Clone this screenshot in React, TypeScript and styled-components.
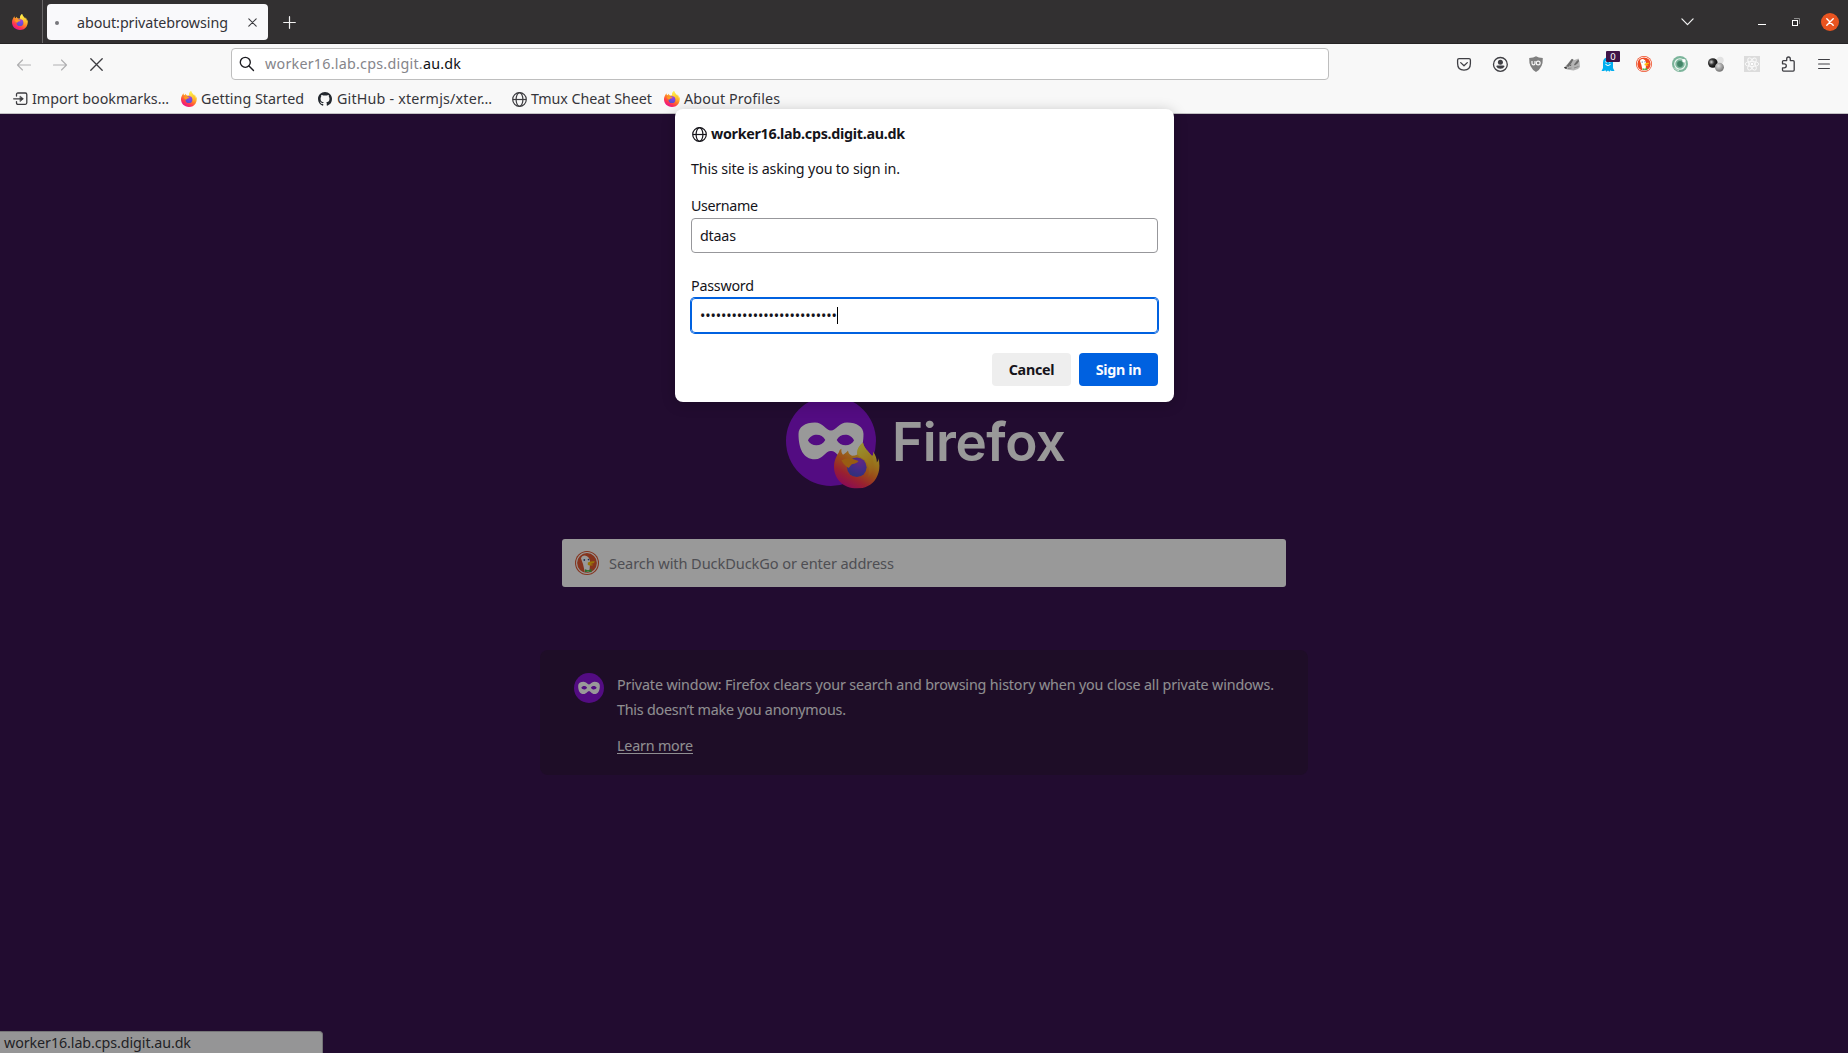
import React, { useId, useLayoutEffect, useRef, useState } from "react";
import styled, { createGlobalStyle } from "styled-components";

const UI_FONT = `"Noto Sans", "Open Sans", sans-serif`;

const GlobalStyle = createGlobalStyle`
  * { box-sizing: border-box; }
  html, body { margin: 0; padding: 0; }
  body { font-family: ${UI_FONT}; font-size: 14.3px; line-height: 20px; overflow: hidden; }
  svg { display: block; flex: none; }
`;

/* Text set to a known width by adjusting its tracking. */
const Run = styled.span<{ $w: number }>`
  display: inline-block;
  flex: none;
  width: ${(p) => p.$w}px;
  white-space: nowrap;
`;

function Fit({ w, children }: { w: number; children: React.ReactNode }) {
  const ref = useRef<HTMLSpanElement>(null);
  const [spacing, setSpacing] = useState(0);
  useLayoutEffect(() => {
    const el = ref.current;
    if (!el) return;
    const natural = el.getBoundingClientRect().width;
    const count = (el.textContent || "").length;
    if (count > 1) setSpacing((w - natural) / (count - 1));
  }, [w]);
  return (
    <Run $w={w}>
      <span ref={ref} style={{ letterSpacing: spacing }}>
        {children}
      </span>
    </Run>
  );
}

/* ---------- icons ---------- */

function FirefoxMark({ size, x, y }: { size: number; x?: number; y?: number }) {
  const id = useId();
  const body = `${id}b`;
  const globe = `${id}g`;
  const flame = `${id}f`;
  return (
    <svg width={size} height={size} x={x} y={y} viewBox="0 0 46 46">
      <defs>
        <linearGradient id={body} x1="0.8" y1="0.08" x2="0.28" y2="0.95">
          <stop offset="0" stopColor="#fff04a" />
          <stop offset="0.3" stopColor="#ffbd2e" />
          <stop offset="0.55" stopColor="#ff7a2a" />
          <stop offset="0.78" stopColor="#ff3750" />
          <stop offset="1" stopColor="#e8158a" />
        </linearGradient>
        <linearGradient id={flame} x1="0.4" y1="0" x2="0.7" y2="1">
          <stop offset="0" stopColor="#fff44f" />
          <stop offset="0.6" stopColor="#ffc22e" />
          <stop offset="1" stopColor="#ff9a2b" stopOpacity="0.2" />
        </linearGradient>
        <radialGradient id={globe} cx="0.65" cy="0.2" r="0.9">
          <stop offset="0" stopColor="#a040e0" />
          <stop offset="0.5" stopColor="#7048e0" />
          <stop offset="1" stopColor="#4a55c8" />
        </radialGradient>
      </defs>
      <path
        fill={`url(#${body})`}
        d="M29 0C29.500 5 34 8.500 37 12.500C38.500 14.500 39.600 12.500 39 9C42 13 43 17 42.800 20C44.300 18.500 44.600 16.500 44.300 15C46.400 23 45.500 30 42 36C38 42.800 30.500 46 23 46C9 46 0 36 0 24C0 18 2.600 13.500 5 9.500C5.300 7.800 6.500 6.700 7.500 6.300C7.100 8.600 7.500 10.500 9 12.200C10.600 11.600 12.300 10 14 8C14.300 10.600 15.500 12.300 18 13.200C20 13.200 21.800 12.800 23.500 12C22.500 7 25.500 3 29 0Z"
      />
      <path
        fill={`url(#${flame})`}
        d="M29 0C29.500 5 34 8.500 37 12.500C41 18 40.500 29 34 35C36.500 27 34 18 28 15.500C26 14.700 24.800 13.500 23.500 12C22.500 7 25.500 3 29 0Z"
      />
      <circle cx="22.800" cy="24.800" r="9.800" fill={`url(#${globe})`} />
      <path
        fill="#ff9a1f"
        d="M7.500 18C11 15.500 16 15 19 16.500L24.500 18.500C23.500 20.500 21 21 18.500 21.600C17 22 16.500 24 14.500 25.500C13 24.500 10 22.500 7.500 18Z"
      />
    </svg>
  );
}

function MaskBadge({ size, fox }: { size: number; fox?: boolean }) {
  return (
    <svg width={size} height={size} viewBox={fox ? "0 0 94 94" : "0 0 90 90"}>
      <circle cx="45" cy="45" r="45" fill="#8a14d9" />
      <path
        fill="#fff"
        fillRule="evenodd"
        d="M12.500 38C12.500 31 19 26.500 29 26.500C37 26.500 40 34.500 45 34.500S53 26.500 61 26.500C71 26.500 77.500 31 77.500 38C77.500 52 73 63.300 61 63.300C53 63.300 51 55 45 55S37 63.300 29 63.300C17 63.300 12.500 52 12.500 38ZM22 44.500C25 51 36 51 39.300 44C36 37 25 37 22 44.500ZM50.700 44C54 51 65 51 68 44.500C65 37 54 37 50.700 44Z"
      />
      {fox && <FirefoxMark size={46} x={48} y={46.5} />}
    </svg>
  );
}

const Globe = ({ color }: { color: string }) => (
  <svg width="15" height="15" viewBox="0 0 15 15" fill="none" stroke={color} strokeWidth="1.200">
    <circle cx="7.500" cy="7.500" r="6.800" />
    <ellipse cx="7.500" cy="7.500" rx="3.400" ry="6.800" />
    <path d="M1 7.500H14" />
  </svg>
);

const DuckIcon = ({ size, face = "#ee4a23" }: { size: number; face?: string }) => (
  <svg width={size} height={size} viewBox="0 0 24 24">
    <circle cx="12" cy="12" r="12" fill={face} />
    <circle cx="12" cy="12" r="10.900" fill="#fff" />
    <circle cx="12" cy="12" r="9.900" fill={face} />
    <path fill="#fff" d="M6 7.500C6.500 4.500 9.500 3.700 12 5.200C14.500 6.500 15.200 9 15 12L14.500 20.500Q12.500 21.800 9.800 21L8 13Z" />
    <path fill="#ffc20d" d="M12.800 11.500Q16 10 19.800 10.300L19 12Q17 12.600 15.400 13Q17 13.500 18.300 13.700Q17 15.300 12.800 14Z" />
    <path fill="#4cb648" d="M10 18.200L13 19.300L16.500 18V21.300L13 20.500L10 21.200Z" />
    <circle cx="9.300" cy="9" r="0.900" fill="#2d4f8e" />
    <circle cx="13.500" cy="8.600" r="0.800" fill="#2d4f8e" />
  </svg>
);

const ImportIcon = () => (
  <svg width="15" height="14" viewBox="0 0 15 14" fill="none" stroke="#3c3c40" strokeWidth="1.300" strokeLinecap="round" strokeLinejoin="round">
    <path d="M3.500 4V2.500Q3.500 1 5 1H12.300Q13.800 1 13.800 2.500V10.800Q13.800 12.300 12.300 12.300H5Q3.500 12.300 3.500 10.800V9.600" />
    <path d="M0.700 6.800H9.500" />
    <path d="M7.300 4.200L10.400 6.800L7.300 9.400Z" fill="#3c3c40" strokeWidth="0.600" />
  </svg>
);

const GithubIcon = () => (
  <svg width="14" height="14" viewBox="0 0 16 16" fill="#24292f">
    <path d="M8 0C3.580 0 0 3.580 0 8c0 3.540 2.290 6.530 5.470 7.590.4.070.55-.17.55-.38 0-.19-.01-.82-.01-1.490-2.010.37-2.530-.49-2.690-.94-.09-.23-.48-.94-.82-1.130-.28-.15-.68-.52-.01-.53.63-.01 1.080.58 1.230.82.72 1.210 1.870.87 2.330.66.07-.52.28-.87.51-1.070-1.780-.2-3.640-.89-3.640-3.950 0-.87.31-1.590.82-2.150-.08-.2-.36-1.020.08-2.120 0 0 .67-.21 2.200.82.64-.18 1.320-.27 2-.27s1.360.09 2 .27c1.530-1.040 2.200-.82 2.200-.82.44 1.100.16 1.920.08 2.120.51.56.82 1.270.82 2.150 0 3.070-1.870 3.750-3.650 3.950.29.25.54.73.54 1.480 0 1.070-.01 1.930-.01 2.200 0 .21.15.46.55.38A8.010 8.010 0 0 0 16 8c0-4.420-3.580-8-8-8z" />
  </svg>
);

const ArrowIcon = ({ flip }: { flip?: boolean }) => (
  <svg width="16" height="16" viewBox="0 0 16 16" fill="none" stroke="#b0b0b2" strokeWidth="1.150" strokeLinecap="round" strokeLinejoin="round">
    <path d={flip ? "M1.500 8H14.500M9.500 3L14.500 8L9.500 13" : "M14.500 8H1.500M6.500 3L1.500 8L6.500 13"} />
  </svg>
);

const CrossIcon = ({ size, color, width }: { size: number; color: string; width: number }) => (
  <svg width={size} height={size} viewBox={`0 0 ${size} ${size}`} stroke={color} strokeWidth={width} strokeLinecap="round">
    <path d={`M0.800 0.800L${size - 0.8} ${size - 0.8}M${size - 0.8} 0.800L0.800 ${size - 0.8}`} />
  </svg>
);

const PlusIcon = () => (
  <svg width="13" height="13" viewBox="0 0 13 13" stroke="#f2f2f2" strokeWidth="1.200" strokeLinecap="round">
    <path d="M6.500 0.700V12.300M0.700 6.500H12.300" />
  </svg>
);

const ChevronIcon = () => (
  <svg width="13" height="8" viewBox="0 0 13 8" fill="none" stroke="#f2f2f2" strokeWidth="1.250" strokeLinecap="round" strokeLinejoin="round">
    <path d="M0.900 0.900L6.500 6.600L12.100 0.900" />
  </svg>
);

const RestoreIcon = () => (
  <svg width="8" height="8" viewBox="0 0 8 8" fill="none">
    <path d="M2 0.500H7.500V6" stroke="#8d8c8c" />
    <rect x="0.500" y="2.500" width="5" height="5" stroke="#fff" />
  </svg>
);

const SearchIcon = () => (
  <svg width="16" height="16" viewBox="0 0 16 16" fill="none" stroke="#1b1b20" strokeWidth="1.350" strokeLinecap="round">
    <circle cx="6.300" cy="6.300" r="5" />
    <path d="M10 10L14.500 14.500" />
  </svg>
);

const PocketIcon = () => (
  <svg width="16" height="16" viewBox="0 0 16 16" fill="none" stroke="#3f3f44" strokeWidth="1.300" strokeLinecap="round" strokeLinejoin="round">
    <path d="M3 2.700H13Q14.400 2.700 14.400 4.100V7.600Q14.400 14.100 8 14.100T1.600 7.600V4.100Q1.600 2.700 3 2.700Z" />
    <path d="M4.700 6.600L8 9.700L11.300 6.600" />
  </svg>
);

const AccountIcon = () => (
  <svg width="16" height="16" viewBox="0 0 16 16">
    <circle cx="8.400" cy="8.400" r="6.900" fill="none" stroke="#3f3f44" strokeWidth="1.300" />
    <circle cx="8.400" cy="6.300" r="2.500" fill="#3f3f44" />
    <path fill="#3f3f44" d="M5.400 9.600H11.400Q12.500 9.600 12.500 10.600Q11.400 12.800 8.400 12.800T4.300 10.600Q4.300 9.600 5.400 9.600Z" />
  </svg>
);

const ShieldIcon = () => (
  <svg width="16" height="16" viewBox="0 0 16 16">
    <path fill="#808080" d="M8 0.300Q10.500 2 14.800 2Q15.300 12 8 15.900Q0.700 12 1.200 2Q5.500 2 8 0.300Z" />
    <g fill="none" stroke="#f8f8f8" strokeWidth="1.200">
      <path d="M4 5V7.300Q4 8.900 5.500 8.900T7 7.300V5" />
      <circle cx="10.200" cy="7" r="1.900" />
    </g>
  </svg>
);

const BadgerIcon = () => (
  <svg width="16" height="16" viewBox="0 0 16 16">
    <path fill="#b4b4b4" d="M0 11.500L3.500 8L7.500 3L10.500 4L14.500 2.500L15.500 5.500L16 11L14 13L9.500 14.500L3 13.500Z" />
    <path fill="#6a6a6a" d="M2 10.500L5.500 6L8 2.700L9.300 3.800L7.500 7L4.800 10.800ZM10 8.500L12.500 5.200L14.600 3.500L15 5.300L13.500 7.600L10.800 9.600Z" />
    <path stroke="#8a8a8a" strokeWidth="1" d="M10 12L14.500 10.500M4 12.500L7.500 12" fill="none" />
    <path fill="#3a3a3a" d="M0 11L2.500 11L3.200 12.500L1 12.800ZM5.800 9.200L7.300 8.400L7 9.900Z" />
  </svg>
);

const GhostIcon = () => (
  <svg width="16" height="16" viewBox="0 0 16 16">
    <path fill="#00aef0" d="M8 1.500Q13 1.500 13 6.500V12L14.500 15H11.500L10.500 14.200L9.500 15.800L8 14.400L6.300 15.800L5.300 14.300L4 15H1.500L3 12V6.500Q3 1.500 8 1.500Z" />
    <path d="M5.500 8Q8 11 10.500 8" fill="none" stroke="#fff" strokeWidth="1.100" />
    <circle cx="6.300" cy="5.700" r="0.900" fill="#fff" />
    <circle cx="9.700" cy="5.700" r="0.900" fill="#fff" />
  </svg>
);

const EyeIcon = () => (
  <svg width="16" height="16" viewBox="0 0 16 16">
    <circle cx="8" cy="8" r="8" fill="#7cb59b" />
    <circle cx="8" cy="8" r="5.300" fill="none" stroke="#eef7f2" strokeWidth="1.100" />
    <circle cx="8" cy="8" r="2.900" fill="#438468" />
    <circle cx="12" cy="4.800" r="1.700" fill="#fff" />
    <path d="M2 11.500Q4 14.500 7 14.700" stroke="#cfe5da" fill="none" />
  </svg>
);

const SpheresIcon = () => {
  const id = useId();
  return (
    <svg width="16" height="16" viewBox="0 0 16 16">
      <defs>
        <radialGradient id={`${id}d`} cx="0.35" cy="0.4" r="0.65">
          <stop offset="0" stopColor="#d8d8d8" />
          <stop offset="0.45" stopColor="#333" />
          <stop offset="1" stopColor="#050505" />
        </radialGradient>
        <radialGradient id={`${id}l`} cx="0.4" cy="0.35" r="0.7">
          <stop offset="0" stopColor="#dedede" />
          <stop offset="1" stopColor="#6c6c6c" />
        </radialGradient>
      </defs>
      <circle cx="12.200" cy="4.200" r="3.500" fill="#e2e2e2" />
      <circle cx="4.800" cy="7" r="4.800" fill={`url(#${id}d)`} />
      <circle cx="11.400" cy="11.200" r="4.500" fill={`url(#${id}l)`} />
    </svg>
  );
};

const ReactIcon = () => (
  <svg width="16" height="16" viewBox="0 0 16 16">
    <rect width="16" height="16" fill="#dcdcdc" />
    <g fill="none" stroke="#fafafa" strokeWidth="0.900">
      <ellipse cx="8" cy="8" rx="6.800" ry="2.600" />
      <ellipse cx="8" cy="8" rx="6.800" ry="2.600" transform="rotate(60 8 8)" />
      <ellipse cx="8" cy="8" rx="6.800" ry="2.600" transform="rotate(120 8 8)" />
    </g>
    <circle cx="8" cy="8" r="1.300" fill="#fff" />
  </svg>
);

const PuzzleIcon = () => (
  <svg width="16" height="16" viewBox="0 0 16 16" fill="none" stroke="#3f3f44" strokeWidth="1.300" strokeLinejoin="round">
    <path d="M2.500 7.800V5.600Q2.500 4.600 3.500 4.600H6.700V2.900Q6.700 1 8.500 1T10.300 2.900V4.600H13.100Q14.200 4.600 14.200 5.700V14Q14.200 15.100 13.100 15.100H3.500Q2.500 15.100 2.500 14V11.900H4.200Q6.300 11.900 6.300 9.850T4.200 7.800Z" />
  </svg>
);

const MenuIcon = () => (
  <svg width="12" height="12" viewBox="0 0 12 12" stroke="#3f3f44" strokeWidth="1.200" strokeLinecap="round">
    <path d="M0.600 1.500H11.400M0.600 6H11.400M0.600 10.500H11.400" />
  </svg>
);

/* ---------- browser chrome ---------- */

const Browser = styled.div`
  position: relative;
  display: flex;
  flex-direction: column;
  width: 1848px;
  height: 1053px;
  overflow: hidden;
`;

const TitleBar = styled.header`
  display: flex;
  align-items: center;
  height: 44px;
  background: #323031;
  border-bottom: 1px solid #252324;
`;

const PinnedTab = styled.div`
  display: flex;
  align-items: center;
  width: 43px;
  height: 43px;
  padding-left: 12px;
  border-right: 1px solid #686667;
`;

const Tab = styled.div`
  display: flex;
  align-items: center;
  width: 221px;
  height: 36px;
  margin: 1px 0 0 4px;
  padding: 1px 11px 0 8px;
  border-radius: 4px;
  background: #f9f9fb;
  color: #333338;
`;

const LoadingDot = styled.span`
  width: 4px;
  height: 4px;
  margin-right: 18px;
  border-radius: 50%;
  background: #77777b;
`;

const TabClose = styled.span`
  margin: -1px 0 0 auto;
`;

const NewTab = styled.span`
  margin: 1px 0 0 15px;
`;

const WindowControls = styled.div`
  display: flex;
  align-items: center;
  margin-left: auto;
  padding-right: 9px;
`;

const Minimize = styled.span`
  width: 8px;
  height: 1px;
  margin: 5px 26px 0 64px;
  background: #fff;
`;

const CloseWindow = styled.span`
  display: flex;
  align-items: center;
  justify-content: center;
  width: 18px;
  height: 18px;
  margin-left: 21px;
  border-radius: 50%;
  background: #e95420;
`;

const NavBar = styled.nav`
  display: flex;
  align-items: center;
  height: 41px;
  padding: 0 16px;
  background: #f8f8f8;
`;

const NavButtons = styled.div`
  display: flex;
  align-items: center;
  gap: 20px;
  width: 215px;
`;

const StopButton = styled.span`
  padding-left: 1.5px;
`;

const UrlBar = styled.div`
  display: flex;
  align-items: center;
  gap: 10px;
  width: 1098px;
  height: 32px;
  margin-bottom: 1px;
  padding-left: 7px;
  border: 1px solid #bebebe;
  border-radius: 4px;
  background: #fff;
  color: #85858a;
  line-height: 22px;

  b {
    font-weight: 400;
    color: #101014;
  }
`;

const Extensions = styled.div`
  display: flex;
  align-items: center;
  gap: 20px;
  margin: 0 0 1px auto;
`;

const ExtensionSlot = styled.span`
  position: relative;
  display: flex;
  align-items: center;
  justify-content: center;
  width: 16px;
  height: 16px;
`;

const CountBadge = styled.span`
  position: absolute;
  top: -5px;
  left: 6px;
  width: 14px;
  height: 11px;
  border-radius: 1px;
  background: #3f1548;
  color: #fff;
  font-size: 9.5px;
  line-height: 11px;
  text-align: center;
`;

const BookmarksBar = styled.div`
  display: flex;
  align-items: center;
  height: 29px;
  padding-left: 13px;
  background: #f8f8f8;
  border-bottom: 1px solid #c3c2c4;
  color: #36363b;
`;

const Bookmark = styled.div<{ $gap: number; $after: number }>`
  display: flex;
  align-items: center;
  gap: ${(p) => p.$gap}px;
  margin-right: ${(p) => p.$after}px;
`;

/* ---------- private page ---------- */

const Page = styled.main`
  position: relative;
  display: flex;
  flex: 1;
  flex-direction: column;
  align-items: center;
  padding-top: 282px;
  background: #391450;
`;

const Brand = styled.div`
  display: flex;
  width: 276px;
  height: 94px;
`;

const Wordmark = styled.div`
  margin: 14px 0 0 12px;
  color: #fff;
  font-family: Inter, sans-serif;
  font-size: 53px;
  font-weight: 600;
  line-height: 64px;
`;

const SearchBox = styled.div`
  display: flex;
  align-items: center;
  gap: 10px;
  width: 724px;
  height: 48px;
  margin-top: 49px;
  padding-left: 13px;
  border-radius: 3px;
  background: #fff;
  color: #83838b;
  font-size: 14.6px;
`;

const InfoCard = styled.section`
  display: flex;
  gap: 13px;
  width: 768px;
  height: 125px;
  margin-top: 63px;
  padding: 22px 0 0 34px;
  border-radius: 8px;
  background: #321641;
  color: #efedf2;
  line-height: 25px;

  svg { margin-top: 1px; }
`;

const InfoText = styled.div`
  display: flex;
  flex-direction: column;
`;

const LearnMore = styled.a`
  width: 76px;
  height: 19px;
  margin-top: 13px;
  border-bottom: 1px solid #efedf2;
  line-height: 22px;
`;

const StatusPanel = styled.div`
  position: absolute;
  left: 0;
  bottom: 0;
  width: 323px;
  height: 22px;
  padding-left: 4px;
  border-top: 1px solid #c4c4c6;
  border-right: 1px solid #c4c4c6;
  border-top-right-radius: 4px;
  background: #f9f9fb;
  color: #3a3a40;
  line-height: 21px;
`;

const Dimmer = styled.div`
  position: absolute;
  inset: 0;
  background: rgba(0, 0, 0, 0.4);
`;

/* ---------- sign-in prompt ---------- */

const Dialog = styled.form`
  position: absolute;
  top: 109px;
  left: 675px;
  display: flex;
  flex-direction: column;
  width: 499px;
  height: 293px;
  padding: 15px 16px 16px;
  border-radius: 8px;
  background: #fff;
  box-shadow: 0 2px 14px rgba(0, 0, 0, 0.22);
  color: #15141a;
`;

const Origin = styled.div`
  display: flex;
  align-items: center;
  gap: 4px;
  padding-left: 1px;
  font-weight: 700;
`;

const Message = styled.div`
  margin-top: 15px;
`;

const Label = styled.label<{ $top: number }>`
  margin-top: ${(p) => p.$top}px;
`;

const Field = styled.div<{ $focused?: boolean }>`
  display: flex;
  align-items: center;
  height: 35px;
  margin-top: 2px;
  padding-left: 8px;
  border: 1px solid ${(p) => (p.$focused ? "#0061e0" : "#97979b")};
  border-radius: 4px;
  box-shadow: ${(p) => (p.$focused ? "0 0 0 1px #0061e0" : "none")};
`;

const Caret = styled.span`
  width: 1px;
  height: 17px;
  background: #000;
`;

const Actions = styled.div`
  display: flex;
  justify-content: flex-end;
  gap: 8px;
  margin-top: auto;
`;

const ActionButton = styled.button<{ $primary?: boolean }>`
  display: flex;
  align-items: center;
  justify-content: center;
  width: 79px;
  height: 33px;
  padding: 0;
  border: 0;
  border-radius: 4px;
  background: ${(p) => (p.$primary ? "#0061e0" : "#eeeeee")};
  color: ${(p) => (p.$primary ? "#fbfbfe" : "#15141a")};
  font: 700 14.3px/20px ${UI_FONT};
`;

const EXTENSIONS = [
  <PocketIcon />,
  <AccountIcon />,
  <ShieldIcon />,
  <BadgerIcon />,
  <><GhostIcon /><CountBadge>0</CountBadge></>,
  <DuckIcon size={16} />,
  <EyeIcon />,
  <SpheresIcon />,
  <ReactIcon />,
  <PuzzleIcon />,
  <MenuIcon />,
];

const BOOKMARKS = [
  { icon: <ImportIcon />, label: "Import bookmarks…", width: 137, gap: 4, after: 12 },
  { icon: <FirefoxMark size={16} />, label: "Getting Started", width: 103, gap: 4, after: 14 },
  { icon: <GithubIcon />, label: "GitHub - xtermjs/xter…", width: 155, gap: 5, after: 20 },
  { icon: <Globe color="#3c3c40" />, label: "Tmux Cheat Sheet", width: 121, gap: 4, after: 12 },
  { icon: <FirefoxMark size={16} />, label: "About Profiles", width: 96, gap: 4, after: 0 },
];

export default function App() {
  return (
    <Browser>
      <GlobalStyle />
      <TitleBar>
        <PinnedTab><FirefoxMark size={16} /></PinnedTab>
        <Tab>
          <LoadingDot />
          <Fit w={151}>about:privatebrowsing</Fit>
          <TabClose><CrossIcon size={9} color="#3c3c40" width={1.1} /></TabClose>
        </Tab>
        <NewTab><PlusIcon /></NewTab>
        <WindowControls>
          <ChevronIcon />
          <Minimize />
          <RestoreIcon />
          <CloseWindow><CrossIcon size={8} color="#fff" width={1.4} /></CloseWindow>
        </WindowControls>
      </TitleBar>
      <NavBar>
        <NavButtons>
          <ArrowIcon />
          <ArrowIcon flip />
          <StopButton><CrossIcon size={13} color="#3c3c40" width={1.3} /></StopButton>
        </NavButtons>
        <UrlBar>
          <SearchIcon />
          <Fit w={196}>worker16.lab.cps.digit.<b>au.dk</b></Fit>
        </UrlBar>
        <Extensions>
          {EXTENSIONS.map((icon, i) => (
            <ExtensionSlot key={i}>{icon}</ExtensionSlot>
          ))}
        </Extensions>
      </NavBar>
      <BookmarksBar>
        {BOOKMARKS.map((b) => (
          <Bookmark key={b.label} $gap={b.gap} $after={b.after}>
            {b.icon}
            <Fit w={b.width}>{b.label}</Fit>
          </Bookmark>
        ))}
      </BookmarksBar>
      <Page>
        <Brand>
          <MaskBadge size={94} fox />
          <Wordmark><Fit w={174}>Firefox</Fit></Wordmark>
        </Brand>
        <SearchBox>
          <DuckIcon size={24} face="#de5833" />
          <Fit w={285}>Search with DuckDuckGo or enter address</Fit>
        </SearchBox>
        <InfoCard>
          <MaskBadge size={30} />
          <InfoText>
            <Fit w={657}>Private window: Firefox clears your search and browsing history when you close all private windows.</Fit>
            <Fit w={229}>This doesn’t make you anonymous.</Fit>
            <LearnMore><Fit w={76}>Learn more</Fit></LearnMore>
          </InfoText>
        </InfoCard>
        <StatusPanel><Fit w={187}>worker16.lab.cps.digit.au.dk</Fit></StatusPanel>
        <Dimmer />
      </Page>
      <Dialog>
        <Origin>
          <Globe color="#15141a" />
          <Fit w={194}>worker16.lab.cps.digit.au.dk</Fit>
        </Origin>
        <Message><Fit w={209}>This site is asking you to sign in.</Fit></Message>
        <Label $top={17}><Fit w={67}>Username</Fit></Label>
        <Field><Fit w={36}>dtaas</Fit></Field>
        <Label $top={23}><Fit w={63}>Password</Fit></Label>
        <Field $focused>
          <Fit w={137}>{"•".repeat(26)}</Fit>
          <Caret />
        </Field>
        <Actions>
          <ActionButton type="button"><Fit w={46}>Cancel</Fit></ActionButton>
          <ActionButton type="button" $primary><Fit w={46}>Sign in</Fit></ActionButton>
        </Actions>
      </Dialog>
    </Browser>
  );
}
